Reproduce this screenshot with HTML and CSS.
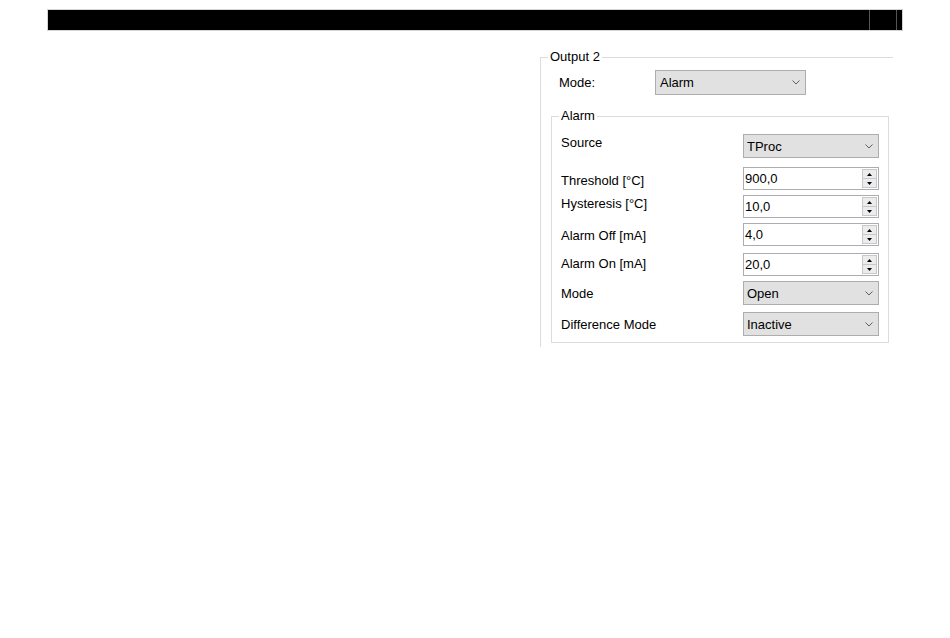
FILE: index.html
```html
<!DOCTYPE html>
<html>
<head>
<meta charset="utf-8">
<title>Output 2</title>
<link rel="stylesheet" href="styles.css">
</head>
<body>
<div class="topbar">
  <div class="tb-main"></div>
  <div class="tb-cell"></div>
  <div class="tb-end"></div>
</div>
<div class="main">
  <div class="left-pane"></div>
  <fieldset class="group outer">
    <legend>Output 2</legend>
    <div class="outer-body">
      <div class="mode-row">
        <span class="mode-label">Mode:</span>
        <div class="combo combo-mode"><span class="combo-text">Alarm</span><svg class="chev" width="8" height="5" viewBox="0 0 8 5"><polyline points="0.5,0.5 4,4 7.5,0.5" fill="none" stroke="#606060" stroke-width="1"/></svg></div>
      </div>
      <fieldset class="group alarm">
        <legend>Alarm</legend>
        <div class="alarm-body">
          <div class="row">
            <span class="lbl">Source</span>
            <div class="combo"><span class="combo-text">TProc</span><svg class="chev" width="8" height="5" viewBox="0 0 8 5"><polyline points="0.5,0.5 4,4 7.5,0.5" fill="none" stroke="#606060" stroke-width="1"/></svg></div>
          </div>
          <div class="row gap9">
            <span class="lbl off5">Threshold [°C]</span>
            <div class="spinbox"><span class="spin-text">900,0</span><div class="spin"><div class="spin-btn"><svg width="5" height="3" viewBox="0 0 5 3"><polygon points="2.5,0 5,3 0,3" fill="#000"/></svg></div><div class="spin-btn"><svg width="5" height="3" viewBox="0 0 5 3"><polygon points="0,0 5,0 2.5,3" fill="#000"/></svg></div></div></div>
          </div>
          <div class="row gap5">
            <span class="lbl">Hysteresis [°C]</span>
            <div class="spinbox"><span class="spin-text">10,0</span><div class="spin"><div class="spin-btn"><svg width="5" height="3" viewBox="0 0 5 3"><polygon points="2.5,0 5,3 0,3" fill="#000"/></svg></div><div class="spin-btn"><svg width="5" height="3" viewBox="0 0 5 3"><polygon points="0,0 5,0 2.5,3" fill="#000"/></svg></div></div></div>
          </div>
          <div class="row gap5">
            <span class="lbl off4">Alarm Off [mA]</span>
            <div class="spinbox"><span class="spin-text">4,0</span><div class="spin"><div class="spin-btn"><svg width="5" height="3" viewBox="0 0 5 3"><polygon points="2.5,0 5,3 0,3" fill="#000"/></svg></div><div class="spin-btn"><svg width="5" height="3" viewBox="0 0 5 3"><polygon points="0,0 5,0 2.5,3" fill="#000"/></svg></div></div></div>
          </div>
          <div class="row gap7">
            <span class="lbl off2">Alarm On [mA]</span>
            <div class="spinbox"><span class="spin-text">20,0</span><div class="spin"><div class="spin-btn"><svg width="5" height="3" viewBox="0 0 5 3"><polygon points="2.5,0 5,3 0,3" fill="#000"/></svg></div><div class="spin-btn"><svg width="5" height="3" viewBox="0 0 5 3"><polygon points="0,0 5,0 2.5,3" fill="#000"/></svg></div></div></div>
          </div>
          <div class="row gap5">
            <span class="lbl off4">Mode</span>
            <div class="combo"><span class="combo-text">Open</span><svg class="chev" width="8" height="5" viewBox="0 0 8 5"><polyline points="0.5,0.5 4,4 7.5,0.5" fill="none" stroke="#606060" stroke-width="1"/></svg></div>
          </div>
          <div class="row gap7">
            <span class="lbl off4">Difference Mode</span>
            <div class="combo"><span class="combo-text">Inactive</span><svg class="chev" width="8" height="5" viewBox="0 0 8 5"><polyline points="0.5,0.5 4,4 7.5,0.5" fill="none" stroke="#606060" stroke-width="1"/></svg></div>
          </div>
        </div>
      </fieldset>
    </div>
  </fieldset>
</div>
</body>
</html>
```

FILE: styles.css
```css
html, body {
  margin: 0;
  padding: 0;
  background: #ffffff;
}

body {
  font-family: "Liberation Sans", Arial, sans-serif;
  font-size: 13px;
  color: #000000;
}

.topbar {
  display: flex;
  box-sizing: border-box;
  margin: 9px 0 0 47px;
  width: 856px;
  height: 22px;
  border: 1px solid #d4d4d4;
  background: #000000;
}

.tb-main {
  width: 821px;
}

.tb-cell {
  box-sizing: border-box;
  width: 27px;
  border-left: 1px solid #555555;
}

.tb-end {
  flex: 1;
  border-left: 1px solid #555555;
}

.main {
  display: grid;
  grid-template-columns: 540px 353px;
  margin-top: 18px;
}

fieldset.group {
  margin: 0;
  padding: 0;
  min-width: 0;
}

fieldset.group > legend {
  padding: 0 2px;
  margin-left: 7px;
  line-height: 16px;
  font-size: 13px;
}

.outer {
  border: none;
  border-top: 1px solid #dcdcdc;
  border-left: 1px solid #dcdcdc;
}

.outer-body {
  padding: 5px 0 4px 10px;
}

.mode-row {
  display: flex;
  align-items: center;
  height: 24px;
  padding-left: 8px;
  margin-bottom: 14px;
}

.mode-label {
  width: 96px;
  line-height: 18px;
  padding-top: 1px;
}

.alarm {
  box-sizing: border-box;
  width: 338px;
  border: 1px solid #dcdcdc;
}

.alarm > legend {
  margin-left: 6px;
}

.alarm-body {
  padding: 10px 9px 6px 9px;
}

.row {
  display: flex;
  align-items: flex-start;
}

.gap5 { margin-top: 5px; }
.gap7 { margin-top: 7px; }
.gap9 { margin-top: 9px; }

.lbl {
  width: 182px;
  line-height: 18px;
}

.off2 { margin-top: 2px; }
.off4 { margin-top: 4px; }
.off5 { margin-top: 5px; }

.combo {
  box-sizing: border-box;
  display: flex;
  align-items: center;
  width: 136px;
  height: 24px;
  padding: 0 5px 0 3px;
  border: 1px solid #adadad;
  background: #e1e1e1;
}

.combo-mode {
  width: 151px;
  height: 25px;
  padding-left: 4px;
}

.combo-text {
  flex: 1;
  line-height: 16px;
  padding-top: 1px;
}

.chev {
  display: block;
}

.spinbox {
  box-sizing: border-box;
  display: flex;
  width: 136px;
  height: 23px;
  border: 1px solid #abadb3;
  background: #ffffff;
}

.spin-text {
  flex: 1;
  padding-left: 1px;
  line-height: 21px;
}

.spin {
  display: flex;
  flex-direction: column;
  width: 15px;
  padding: 1px 1px 1px 0;
}

.spin-btn {
  flex: 1;
  display: flex;
  align-items: center;
  justify-content: center;
  box-sizing: border-box;
  border: 1px solid #c8c8c8;
  background: #ececec;
}

.spin-btn + .spin-btn {
  border-top: none;
}

.spin-btn svg {
  display: block;
}
```
